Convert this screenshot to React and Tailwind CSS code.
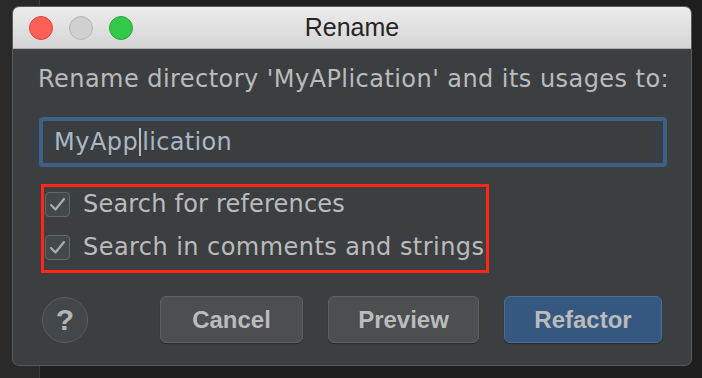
import React from "react";

const body = { fontFamily: '"DejaVu Sans", "Noto Sans", sans-serif' };
const ui = { fontFamily: '"Liberation Sans", Arial, sans-serif' };

function Check() {
    return (
        <div className="w-[25px] h-[25px] rounded-[4px] border border-[#646869] bg-[#43484a] flex items-center justify-center shrink-0">
            <svg width="17" height="15" viewBox="0 0 17 15" fill="none">
                <path d="M2 8 L6.5 12.5 L15 2" stroke="#a9abad" strokeWidth="2.2" strokeLinecap="round" strokeLinejoin="round" />
            </svg>
        </div>
    );
}

function Button({ children, primary, width }) {
    return (
        <button
            type="button"
            style={ui}
            className={
                "h-[47px] rounded-[6px] border text-[24px] font-bold text-[#bbbbbb] shadow-[0_1px_1px_rgba(0,0,0,0.35)] " +
                width +
                " " +
                (primary ? "bg-[#365880] border-[#4a6f98]" : "bg-[#4b4f51] border-[#5d6163]")
            }
        >
            {children}
        </button>
    );
}

export default function App() {
    return (
        <div className="relative w-[702px] h-[378px] bg-[#1e1e1e] overflow-hidden">
            <div className="absolute left-0 top-0 w-[40px] h-full bg-[#2a2a2a] border-r border-[#3b3b3b]" />

            <div className="relative ml-[12px] pt-[6px]">
                <div className="w-[680px] h-[360px] rounded-[7px] overflow-hidden border border-[#5a5a5a] flex flex-col bg-[#3c3f41]">
                    <div className="h-[42px] shrink-0 flex items-center relative bg-gradient-to-b from-[#ececec] to-[#d5d5d5] border-b border-[#b1b1b1]">
                        <div className="flex gap-[16px] pl-[16px]">
                            <span className="w-[24px] h-[24px] rounded-full bg-[#fe5f57] border border-[#e0443e]" />
                            <span className="w-[24px] h-[24px] rounded-full bg-[#d0d0d0] border border-[#b8b8b8]" />
                            <span className="w-[24px] h-[24px] rounded-full bg-[#34c84a] border border-[#27aa35]" />
                        </div>
                        <div style={ui} className="absolute inset-0 flex items-center justify-center text-[25px] text-[#262626]">
                            Rename
                        </div>
                    </div>

                    <div className="flex flex-col flex-1">
                        <div style={body} className="ml-[25px] mt-[16px] h-[28px] leading-[28px] text-[24px] tracking-[0.45px] text-[#bbbbbb] whitespace-nowrap">
                            Rename directory 'MyAPlication' and its usages to:
                        </div>

                        <div className="ml-[26px] mt-[24px] w-[628px] h-[50px] rounded-[4px] border-[4px] border-[#3d6185] bg-[#3b3e40] flex items-center pl-[11px]">
                            <span style={body} className="text-[24px] tracking-[0.5px] text-[#a9b8c6] whitespace-nowrap">
                                MyApp
                            </span>
                            <span className="w-[2px] h-[28px] bg-[#bbbbbb] mx-[1px]" />
                            <span style={body} className="text-[24px] tracking-[0.3px] text-[#a9b8c6] whitespace-nowrap">
                                lication
                            </span>
                        </div>

                        <div className="ml-[28px] mt-[17px] w-[448px] h-[89px] border-[3px] border-[#ff2617] flex flex-col pl-[1px] pt-[3px] gap-[15px]">
                            <div className="flex items-center h-[28px] gap-[13px]">
                                <Check />
                                <span style={body} className="text-[24px] leading-[28px] tracking-[0.2px] text-[#bbbbbb] whitespace-nowrap">
                                    Search for references
                                </span>
                            </div>
                            <div className="flex items-center h-[28px] gap-[13px]">
                                <Check />
                                <span style={body} className="text-[24px] leading-[28px] tracking-[0.45px] text-[#bbbbbb] whitespace-nowrap">
                                    Search in comments and strings
                                </span>
                            </div>
                        </div>

                        <div className="flex items-center mt-[23px] pl-[29px] pr-[29px]">
                            <div
                                style={ui}
                                className="w-[46px] h-[46px] rounded-full border border-[#5b5e60] bg-[#44474a] flex items-center justify-center text-[30px] font-bold text-[#b5b5b5]"
                            >
                                ?
                            </div>
                            <div className="flex gap-[25px] ml-auto">
                                <Button width="w-[143px]">Cancel</Button>
                                <Button width="w-[151px]">Preview</Button>
                                <Button width="w-[158px]" primary>
                                    Refactor
                                </Button>
                            </div>
                        </div>
                    </div>
                </div>
            </div>
        </div>
    );
}
